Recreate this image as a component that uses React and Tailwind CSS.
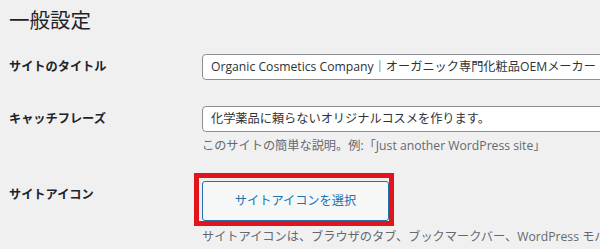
export default function App() {
  const font = { fontFamily: '"Open Sans", "Noto Sans CJK JP", sans-serif' };
  return (
    <div
      className="relative w-[600px] h-[249px] overflow-hidden bg-[#f0f0f1] text-[#1d2327] pl-[9px]"
      style={font}
    >
      <h1 className="pt-[6px] text-[20.5px] leading-[29px] font-normal text-[#1d2327]">一般設定</h1>

      <div className="mt-[19px] flex items-center">
        <div className="w-[193px] shrink-0 text-[12.2px] font-bold leading-[26px]">サイトのタイトル</div>
        <div className="w-[440px] shrink-0 h-[26px] rounded-[4px] border border-[#8c8f94] bg-white pl-[8px] text-[12.2px] leading-[24px] text-[#2c3338] whitespace-nowrap">
          Organic Cosmetics Company｜オーガニック専門化粧品OEMメーカー
        </div>
      </div>

      <div className="mt-[26px] flex">
        <div className="w-[193px] shrink-0 text-[12.2px] font-bold leading-[26px]">キャッチフレーズ</div>
        <div className="flex flex-col shrink-0">
          <div className="w-[440px] shrink-0 h-[26px] rounded-[4px] border border-[#8c8f94] bg-white pl-[8px] text-[12.2px] leading-[24px] text-[#2c3338] whitespace-nowrap">
            化学薬品に頼らないオリジナルコスメを作ります。
          </div>
          <div className="mt-[5px] text-[12.2px] leading-[18px] text-[#646970] whitespace-nowrap">
            このサイトの簡単な説明。例:「Just another WordPress site」
          </div>
        </div>
      </div>

      <div className="mt-[26px] flex">
        <div className="w-[193px] shrink-0 text-[12.2px] font-bold leading-[28px]">サイトアイコン</div>
        <div className="flex flex-col shrink-0">
          <button className="w-[187px] h-[40px] rounded-[3px] border border-[#2271b1] bg-[#f6f7f7] text-[12.2px] text-[#2271b1]">
            サイトアイコンを選択
          </button>
          <div className="mt-[7px] text-[12.2px] leading-[18px] text-[#646970] whitespace-nowrap">
            サイトアイコンは、ブラウザのタブ、ブックマークバー、WordPress モバイルアプリで表示されます。
          </div>
        </div>
      </div>

      <div className="absolute left-[194px] top-[173px] w-[200px] h-[53px] border-[5px] border-[#e3131b]" />
    </div>
  );
}
